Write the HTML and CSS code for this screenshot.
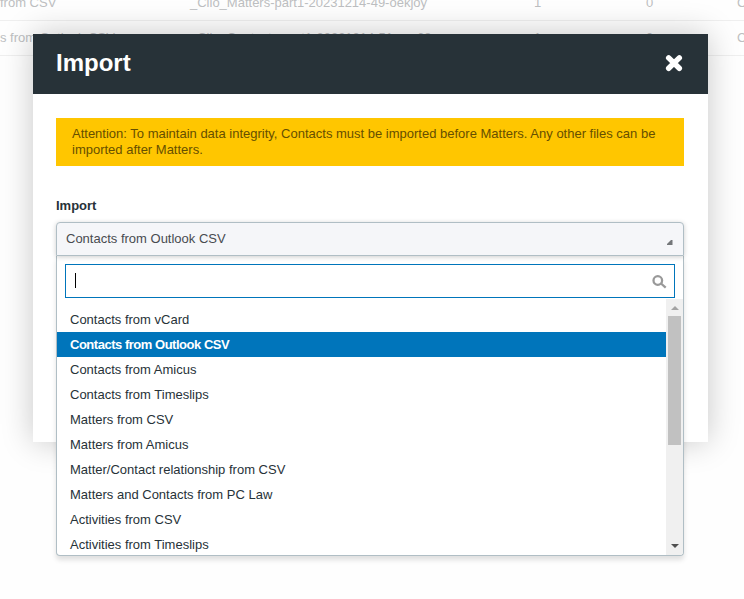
FILE: index.html
```
<!DOCTYPE html>
<html lang="en">
<head>
<meta charset="utf-8">
<title>Import</title>
<link rel="stylesheet" href="styles.css">
</head>
<body>
<div class="history">
  <div class="row"><span class="kind">from CSV</span><span class="file">_Clio_Matters-part1-20231214-49-oekjoy</span><span class="total">1</span><span class="errors">0</span><span>C</span></div>
  <div class="row"><span class="kind">s from Outlook CSV</span><span class="file">_Clio_Contacts-part1-20231214-51-xxx68</span><span class="total">1</span><span class="errors">0</span><span>C</span></div>
</div>
<div class="modal">
  <header class="modal-header">
    <h1>Import</h1>
    <svg class="close" viewBox="0 0 18 18"><path d="M3.700 3.900 14.300 14.300M14.300 3.900 3.700 14.300"/></svg>
  </header>
  <main class="modal-body">
    <p class="alert">Attention: To maintain data integrity, Contacts must be imported before Matters. Any other files can be imported after Matters.</p>
    <div class="label">Import</div>
    <div class="select">
      <div class="selected"><span>Contacts from Outlook CSV</span><svg class="corner" viewBox="0 0 6 5"><path d="M0 5V4L4 0H5.500V5Z"/></svg></div>
      <div class="dropdown">
        <div class="search"><i class="caret"></i><svg class="magnifier" viewBox="0 0 15 14"><circle cx="5.800" cy="5.500" r="4.300"/><path d="M9 8.500 13.700 12.600"/></svg></div>
        <div class="list">
          <ul class="options">
            <li>Contacts from vCard</li>
            <li class="active">Contacts from Outlook CSV</li>
            <li>Contacts from Amicus</li>
            <li>Contacts from Timeslips</li>
            <li>Matters from CSV</li>
            <li>Matters from Amicus</li>
            <li>Matter/Contact relationship from CSV</li>
            <li>Matters and Contacts from PC Law</li>
            <li>Activities from CSV</li>
            <li>Activities from Timeslips</li>
          </ul>
          <div class="scrollbar"><i class="up"></i><i class="thumb"></i><i class="down"></i></div>
        </div>
      </div>
    </div>
  </main>
</div>
</body>
</html>
```
FILE: styles.css
```
* { box-sizing: border-box; }
body {
  margin: 0;
  height: 599px;
  position: relative;
  overflow: hidden;
  background: #fefefe;
  color: #273238;
  font: 13px/16px "Liberation Sans", Arial, sans-serif;
}
.row {
  display: grid;
  grid-template-columns: 190px 344px 112px 91px 1fr;
  height: 35px;
  align-items: center;
  border-bottom: 1px solid #efefef;
  color: #bdbfc1;
  white-space: nowrap;
}
.row:first-child { height: 21px; align-items: start; }
.row:first-child span { margin-top: -5px; }
.modal {
  position: absolute;
  left: 33px;
  top: 34px;
  width: 675px;
  height: 408px;
  background: #fff;
  box-shadow: 0 0 30px rgba(0, 0, 0, .22);
}
.modal-header {
  height: 60px;
  padding: 0 25px 2px 23px;
  background: #273238;
  display: flex;
  align-items: center;
  justify-content: space-between;
}
h1 { margin: 0; color: #fff; font-size: 24px; line-height: 28px; }
.close { width: 18px; height: 18px; }
.close path { stroke: #fff; stroke-width: 5.500; stroke-linecap: round; }
.modal-body { padding: 24px 24px 0 23px; }
.alert {
  margin: 0 0 32px;
  height: 48px;
  padding: 8px 16px;
  background: #ffc600;
  color: #664f00;
}
.label { height: 24px; font-weight: bold; line-height: 15px; }
.selected {
  height: 34px;
  padding: 0 11px 0 9px;
  display: flex;
  align-items: center;
  justify-content: space-between;
  border: 1px solid #b0bec5;
  border-radius: 4px 4px 0 0;
  background: #f5f6f9;
  color: #484b50;
  box-shadow: 0 1px 5px rgba(0, 0, 0, .2);
  position: relative;
}
.corner { width: 6px; height: 5px; margin: 7px -1px 0 0; fill: #74777a; }
.dropdown {
  height: 300px;
  padding-top: 8px;
  border: 1px solid #b0bec5;
  border-top: 0;
  border-radius: 0 0 4px 4px;
  background: #fff;
  box-shadow: 0 4px 5px rgba(0, 0, 0, .12);
  overflow: hidden;
}
.search {
  height: 34px;
  margin: 0 8px 1px;
  padding: 0 7px 0 9px;
  display: flex;
  align-items: center;
  justify-content: space-between;
  border: 1px solid #0075bb;
}
.caret { width: 1px; height: 15px; margin-bottom: 1px; background: #000; }
.magnifier { width: 15px; height: 14px; margin-top: 1px; fill: none; stroke: #999; stroke-width: 2.300; }
.list { display: flex; height: 256px; }
.options { flex: 1; margin: 0; padding: 8px 0 0; list-style: none; }
.options li { height: 25px; padding: 0 13px; line-height: 25px; }
.options .active { background: #0075bb; color: #fff; font-weight: bold; letter-spacing: -.48px; }
.scrollbar { width: 17px; padding: 7px 2px; background: #f0f0f0; display: flex; flex-direction: column; align-items: center; }
.up, .down { border: 4px solid transparent; border-top: 0; border-bottom: 4px solid #a3a3a3; }
.down { border-top: 4px solid #505050; border-bottom: 0; margin-top: auto; }
.thumb { width: 13px; height: 129px; margin-top: 6px; background: #c1c1c1; }
```
